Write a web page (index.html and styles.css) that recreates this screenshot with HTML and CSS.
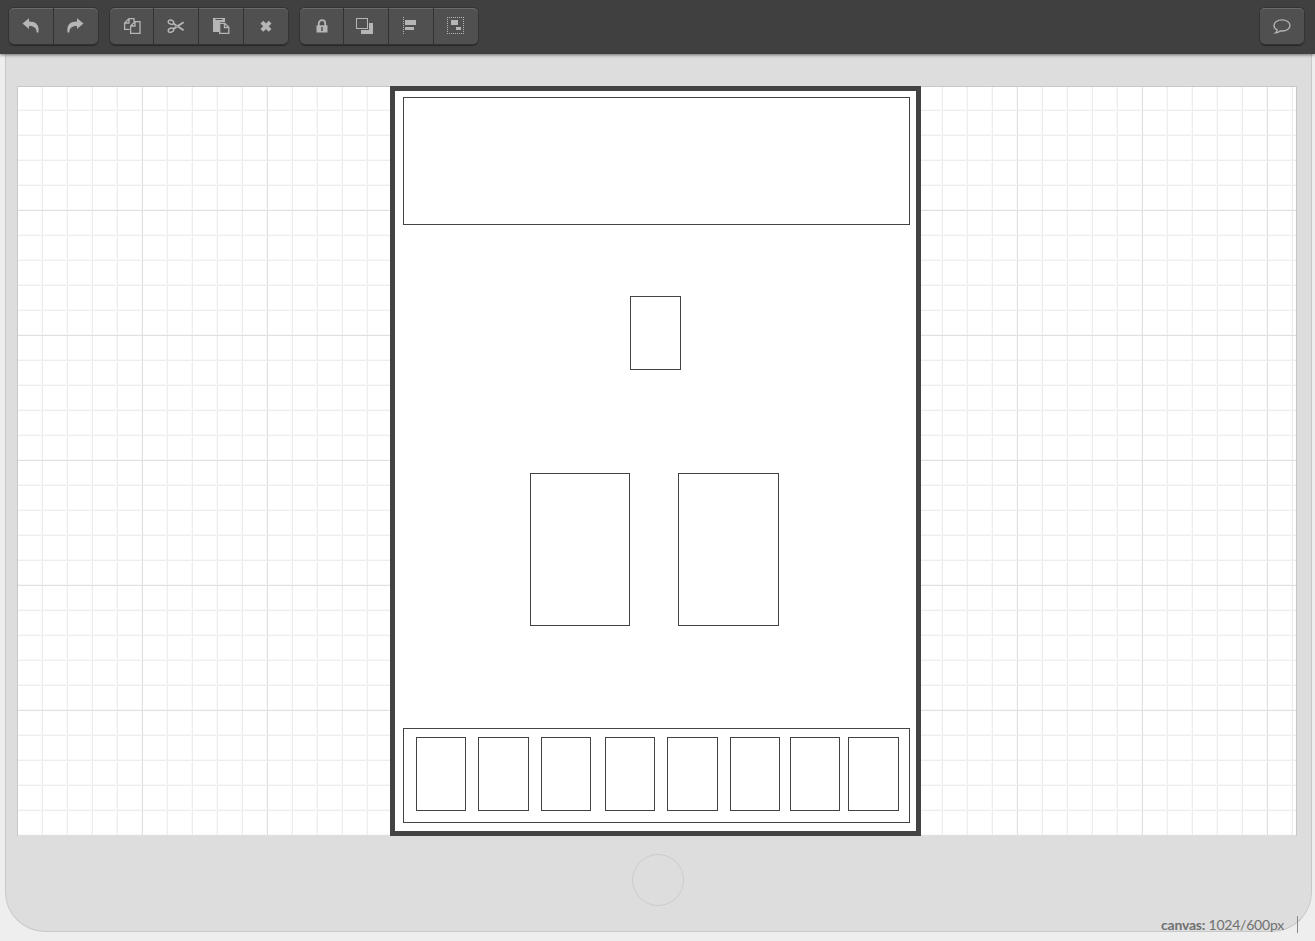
FILE: index.html
```
<!DOCTYPE html>
<html lang="en">
<head>
<meta charset="utf-8">
<title>Wireframe editor</title>
<link rel="stylesheet" href="styles.css">
</head>
<body>
<header class="toolbar">
  <div class="group">
    <button class="tool" aria-label="Undo"><svg width="18" height="16" viewBox="0 0 18 16"><path fill="currentColor" d="M.5 5.5 7 .2v3.3c6.500 0 10.600 3 9.500 10.900h-1.800C14.500 9.600 11.500 8 7 8v3z"/></svg></button>
    <button class="tool" aria-label="Redo"><svg class="redo" width="18" height="16" viewBox="0 0 18 16"><path fill="currentColor" d="M17.500 5.500 11 .2v3.300C4.500 3.500.4 6.500 1.500 14.400h1.800C3.500 9.600 6.500 8 11 8v3z"/></svg></button>
  </div>
  <div class="group wide">
    <button class="tool" aria-label="Copy"><svg width="18" height="18" viewBox="0 0 18 18"><g fill="none" stroke="currentColor" stroke-width="1.300"><path d="M6.500 12.400H1.600V6L6 1.600h5v3.200M6 1.600V6H1.600M7.600 16.400V9L12 4.700h5v11.700zM12 4.700V9H7.600"/></g></svg></button>
    <button class="tool" aria-label="Cut"><svg width="18" height="16" viewBox="0 0 18 16"><g fill="none" stroke="currentColor" stroke-width="1.500"><ellipse cx="4" cy="4.200" rx="2.800" ry="2" transform="rotate(20 4 4.200)"/><ellipse cx="4" cy="12.200" rx="2.800" ry="2" transform="rotate(-20 4 12.200)"/></g><path d="M6 5.300 16.600 12.200M6 11.100 16.600 4.200" fill="none" stroke="currentColor" stroke-width="1.900"/><circle cx="10" cy="8.200" r=".6" fill="#505050"/></svg></button>
    <button class="tool" aria-label="Paste"><svg width="18" height="18" viewBox="0 0 18 18"><path fill="currentColor" d="M1 1h12v4H8.500L7 6.500V15H1z"/><path d="M3.500 2.500h7" stroke="#505050"/><path d="M7.700 16.400V6.300h5.200l3.900 3.900v6.200z" fill="#505050" stroke="currentColor" stroke-width="1.300"/><path d="M12.500 6.300v4.200h4.300" fill="none" stroke="currentColor" stroke-width="1.400"/></svg></button>
    <button class="tool" aria-label="Delete"><svg width="12" height="12" viewBox="0 0 12 12"><path d="m1.900 2.100 8.200 8.200m0-8.200-8.200 8.200" stroke="currentColor" stroke-width="4"/></svg></button>
  </div>
  <div class="group wide">
    <button class="tool" aria-label="Lock"><svg width="12" height="14" viewBox="0 0 12 14"><path d="M2.800 7V4.300a3.200 3.200 0 0 1 6.400 0V7" fill="none" stroke="currentColor" stroke-width="1.800"/><path fill="currentColor" d="M.5 6.300h11V13.500H.5z"/><path d="M6 8v4" stroke="#505050" stroke-width="1.500"/></svg></button>
    <button class="tool" aria-label="Arrange"><svg class="crisp arrange" width="18" height="18" viewBox="0 0 18 18"><path fill="currentColor" d="M14 6h4v11H6v-4h8z"/><path d="M1.500 1.500h11v10h-11z" fill="none" stroke="currentColor"/></svg></button>
    <button class="tool" aria-label="Align"><svg class="crisp align" width="14" height="18" viewBox="0 0 14 18"><path d="M.5 0v17" stroke="currentColor" stroke-dasharray="1 1"/><path fill="currentColor" d="M2 3h11v5H2zM2 10h9v3H2z"/></svg></button>
    <button class="tool" aria-label="Group"><svg class="crisp" width="18" height="18" viewBox="0 0 18 18"><path d="M.5.5h16v16H.5z" fill="none" stroke="currentColor" stroke-dasharray="1 1" stroke-dashoffset=".5"/><path fill="currentColor" d="M4 3h7v5H4zM9 10h5v3H9z"/></svg></button>
  </div>
  <div class="group comments">
    <button class="tool" aria-label="Comments"><svg width="18" height="16" viewBox="0 0 18 16"><path d="M4.300 12C2 11 1 9.400 1 7.500 1 4.300 4.600 1.900 9 1.900s8 2.400 8 5.600-3.600 5.500-8 5.500q-1 0-1.900-.1c-1.100 1-2.700 1.800-4.700 2 1-.8 1.700-1.800 1.900-2.900z" fill="none" stroke="currentColor" stroke-width="1.300"/></svg></button>
  </div>
</header>
<main class="device">
  <section class="screen">
    <div class="page">
      <div class="shape banner"></div>
      <div class="shape deck"></div>
      <div class="shape pile pile-left"></div>
      <div class="shape pile pile-right"></div>
      <div class="shape tray"></div>
      <div class="shape card card-1"></div>
      <div class="shape card card-2"></div>
      <div class="shape card card-3"></div>
      <div class="shape card card-4"></div>
      <div class="shape card card-5"></div>
      <div class="shape card card-6"></div>
      <div class="shape card card-7"></div>
      <div class="shape card card-8"></div>
    </div>
  </section>
  <div class="home"></div>
</main>
<footer class="status"><span><b>canvas:</b> 1024/600px</span></footer>
</body>
</html>
```
FILE: styles.css
```
* { box-sizing: border-box; }

body {
  margin: 0;
  height: 941px;
  overflow: hidden;
  background: #eee;
  font-family: Lato, "Liberation Sans", sans-serif;
}

.toolbar {
  position: relative;
  z-index: 1;
  display: flex;
  align-items: flex-start;
  gap: 12px;
  height: 54px;
  padding: 8px 11px 0 9px;
  background: #404040;
  box-shadow: 0 1px 3px rgba(0, 0, 0, .5);
}

.group {
  display: flex;
  gap: 1px;
  height: 36px;
  border-radius: 5px;
  background: #333;
  box-shadow: 0 0 0 1px #333, 0 2px 1px #292929;
}

.comments { margin-left: auto; }

.tool {
  display: flex;
  align-items: center;
  justify-content: center;
  width: 44px;
  height: 36px;
  margin: 0;
  padding: 0;
  border: 0;
  background: #505050;
  color: #b5b5b5;
  box-shadow: inset 0 1px #6b6b6b;
}

.tool:first-child { border-radius: 5px 0 0 5px; }
.tool:last-child { border-radius: 0 5px 5px 0; }
.tool:only-child { border-radius: 5px; }
.wide .tool:first-child { width: 43px; }

.crisp { shape-rendering: crispEdges; }
.redo { margin-right: 2px; }
.arrange { margin-right: 4px; }
.align { margin-right: 2px; }

.device {
  display: flex;
  flex-direction: column;
  align-items: flex-start;
  width: 1307px;
  height: 878px;
  margin-left: 5px;
  padding: 32px 0 0 11px;
  border: 1px solid #c8c8c8;
  border-top: 0;
  border-radius: 0 0 40px 40px;
  background: #ddd;
}

.screen {
  display: flex;
  justify-content: center;
  width: 1280px;
  height: 750px;
  padding-right: 3px;
  border: 1px solid #c8c8c8;
  border-bottom: 0;
  background:
    linear-gradient(90deg, #e0e0e0 1px, transparent 1px) 0 0 / 125px 125px,
    linear-gradient(#e0e0e0 1px, transparent 1px) 0 -1px / 125px 125px,
    linear-gradient(90deg, #ededed 1px, transparent 1px, transparent 24px, #f9f9f9 24px) 0 0 / 25px 25px,
    linear-gradient(#ededed 1px, transparent 1px, transparent 24px, #f9f9f9 24px) 0 -1px / 25px 25px,
    #fff;
  background-origin: border-box;
}

.page {
  position: relative;
  width: 531px;
  height: 750px;
  margin-top: -1px;
  border: 5px solid #434343;
  background: #fff;
}

/* Shapes placed freely on the drawing page */
.shape {
  position: absolute;
  border: 1px solid #434343;
}

.banner { left: 8px; top: 6px; width: 507px; height: 128px; }
.deck { left: 235px; top: 205px; width: 51px; height: 74px; }
.pile { top: 382px; height: 153px; }
.pile-left { left: 135px; width: 100px; }
.pile-right { left: 283px; width: 101px; }
.tray { left: 8px; top: 637px; width: 507px; height: 95px; }
.card { top: 646px; width: 50px; height: 74px; }
.card-1 { left: 21px; }
.card-2 { left: 83px; width: 51px; }
.card-3 { left: 146px; }
.card-4 { left: 210px; }
.card-5 { left: 272px; width: 51px; }
.card-6 { left: 335px; }
.card-7 { left: 395px; }
.card-8 { left: 453px; width: 51px; }

.home {
  width: 52px;
  height: 52px;
  margin: 18px 0 0 615px;
  border: 1px solid #ccc;
  border-radius: 50%;
}

.status {
  position: absolute;
  right: 17px;
  bottom: 8px;
  height: 17px;
  padding-right: 13px;
  border-right: 1px solid #888;
  color: #707070;
  font-size: 14px;
  line-height: 18px;
  letter-spacing: -.22px;
}
```
